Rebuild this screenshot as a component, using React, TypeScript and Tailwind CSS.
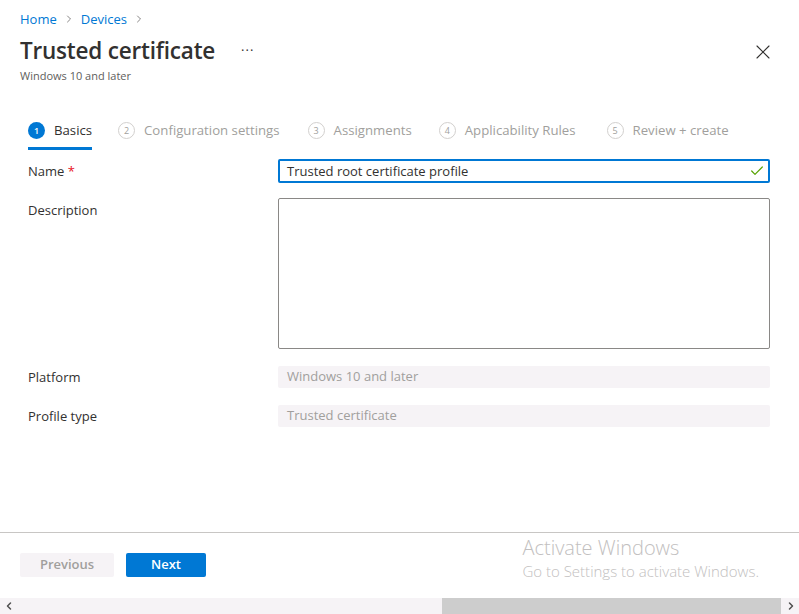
import { Check, ChevronLeft, ChevronRight, X } from "lucide-react";

const steps = [
  { n: 1, label: "Basics", active: true, gap: "" },
  { n: 2, label: "Configuration settings", gap: "ml-[26px]" },
  { n: 3, label: "Assignments", gap: "ml-[28px]" },
  { n: 4, label: "Applicability Rules", gap: "ml-[27px]" },
  { n: 5, label: "Review + create", gap: "ml-[31px]" },
];

const font = { fontFamily: "'Open Sans', 'Noto Sans', sans-serif" };

export default function App() {
  return (
    <div className="flex h-[614px] w-[799px] flex-col overflow-hidden bg-white text-[#323130]" style={font}>
      <header className="flex items-start justify-between pl-5 pr-[24px] pt-[9px]">
        <div>
          <nav className="flex items-center gap-[6px] text-[13px] leading-5 text-[#0078d4]">
            <span>Home</span>
            <ChevronRight className="size-3 text-[#605e5c]" strokeWidth={1.5} />
            <span>Devices</span>
            <ChevronRight className="size-3 text-[#605e5c]" strokeWidth={1.5} />
          </nav>
          <div className="mt-[6px] flex items-center gap-[26px]">
            <h1 className="text-[22.5px] font-semibold leading-8 tracking-[-0.2px]">Trusted certificate</h1>
            <span className="-mt-2 text-[13px] tracking-[1px] text-[#323130]">...</span>
          </div>
          <p className="mt-[1px] text-[11px] leading-4 text-[#605e5c]">Windows 10 and later</p>
        </div>
        <button type="button" className="mt-[31px] text-[#323130]" aria-label="Close">
          <X className="size-6" strokeWidth={1.1} />
        </button>
      </header>

      <div className="mt-[37px] flex items-center px-7">
        {steps.map((step) => (
          <div key={step.n} className={`flex flex-col ${step.gap}`}>
            <div className="flex items-center gap-[9px] pb-[6px]">
              <span
                className={
                  step.active
                    ? "grid size-[17px] place-items-center rounded-full bg-[#0078d4] text-[9px] font-semibold text-white"
                    : "grid size-[17px] place-items-center rounded-full border border-[#d2d0ce] text-[9px] text-[#a19f9d]"
                }
              >
                {step.n}
              </span>
              <span className={step.active ? "text-[13.2px] text-[#323130]" : "text-[13.2px] text-[#a19f9d]"}>
                {step.label}
              </span>
            </div>
            <div className={step.active ? "h-[3px] bg-[#0078d4]" : "h-[3px]"} />
          </div>
        ))}
      </div>

      <div className="mt-[9px] grid grid-cols-[250px_492px] gap-y-[15px] pl-7 text-[13px]">
        <label className="pt-[2px] leading-5">
          Name <span className="text-[#e81123]">*</span>
        </label>
        <div className="flex h-6 items-center justify-between rounded-[2px] border-2 border-[#0078d4] pl-[7px] pr-[3px]">
          <span className="leading-5">Trusted root certificate profile</span>
          <Check className="size-4 text-[#57a300]" strokeWidth={1.8} />
        </div>

        <label className="pt-[2px] leading-5">Description</label>
        <div className="h-[151px] rounded-[2px] border border-[#8a8886]" />

        <label className="mt-[2px] leading-[22px]">Platform</label>
        <div className="mt-[2px] flex h-[22px] items-center rounded-[2px] bg-[#f6f3f6] px-[9px] text-[#a19f9d]">
          Windows 10 and later
        </div>

        <label className="mt-[2px] leading-[22px]">Profile type</label>
        <div className="mt-[2px] flex h-[22px] items-center rounded-[2px] bg-[#f6f3f6] px-[9px] text-[#a19f9d]">
          Trusted certificate
        </div>
      </div>

      <div className="flex-1" />

      <div className="h-px bg-[#c8c6c4]" />
      <footer className="flex h-[65px] items-start justify-between pl-5">
        <div className="mt-5 flex gap-3">
          <button
            type="button"
            className="h-6 w-[94px] rounded-[2px] bg-[#f6f3f6] text-[13px] font-semibold text-[#a19f9d]"
          >
            Previous
          </button>
          <button
            type="button"
            className="h-6 w-20 rounded-[2px] bg-[#0078d4] text-[13px] font-semibold text-white"
          >
            Next
          </button>
        </div>
        <div className="mr-[40px] mt-[3px] text-[#c2c0c0]">
          <p className="text-[20px] font-light leading-6">Activate Windows</p>
          <p className="text-[15px] font-light leading-[22px]">Go to Settings to activate Windows.</p>
        </div>
      </footer>
      <div className="flex h-4 items-center bg-[#f6f3f6]">
        <ChevronLeft className="ml-[3px] size-3 text-[#505050]" strokeWidth={3} />
        <div className="ml-[427px] h-4 w-[339px] bg-[#cdcdcd]" />
        <ChevronRight className="ml-[4px] size-3 text-[#505050]" strokeWidth={3} />
      </div>
    </div>
  );
}
